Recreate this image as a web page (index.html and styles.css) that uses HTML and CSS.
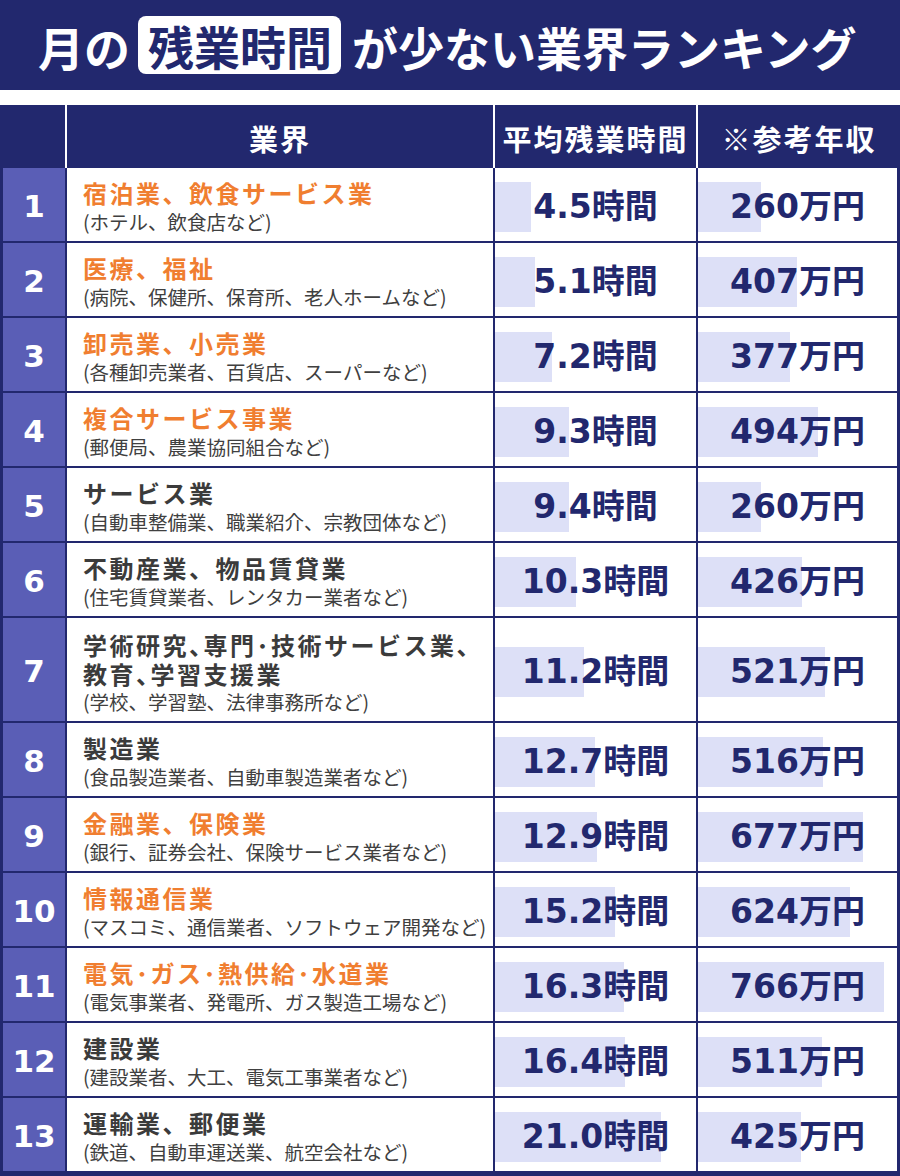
FILE: index.html
```html
<!DOCTYPE html>
<html lang="ja">
<head>
<meta charset="utf-8">
<title>月の残業時間が少ない業界ランキング</title>
<link rel="stylesheet" href="styles.css">
</head>
<body>
<div class="page">
  <header class="title">
    <span class="title-text">月の</span>
    <span class="title-box">残業時間</span>
    <span class="title-text title-rest">が少ない業界ランキング</span>
  </header>

  <div class="table">
    <div class="thead">
      <div class="th"></div>
      <div class="th">業界</div>
      <div class="th">平均残業時間</div>
      <div class="th">※参考年収</div>
    </div>

    <div class="tbody">
      <div class="row">
        <div class="rank">1</div>
        <div class="ind"><div class="name hl">宿泊業、飲食サービス業</div><div class="sub">(ホテル、飲食店など)</div></div>
        <div class="val"><div class="bar" style="width:35.6px"></div><div class="num">4.5時間</div></div>
        <div class="val"><div class="bar" style="width:63.2px"></div><div class="num">260万円</div></div>
      </div>
      <div class="row">
        <div class="rank">2</div>
        <div class="ind"><div class="name hl">医療、福祉</div><div class="sub">(病院、保健所、保育所、老人ホームなど)</div></div>
        <div class="val"><div class="bar" style="width:40.3px"></div><div class="num">5.1時間</div></div>
        <div class="val"><div class="bar" style="width:98.9px"></div><div class="num">407万円</div></div>
      </div>
      <div class="row">
        <div class="rank">3</div>
        <div class="ind"><div class="name hl">卸売業、小売業</div><div class="sub">(各種卸売業者、百貨店、スーパーなど)</div></div>
        <div class="val"><div class="bar" style="width:56.9px"></div><div class="num">7.2時間</div></div>
        <div class="val"><div class="bar" style="width:91.6px"></div><div class="num">377万円</div></div>
      </div>
      <div class="row">
        <div class="rank">4</div>
        <div class="ind"><div class="name hl">複合サービス事業</div><div class="sub">(郵便局、農業協同組合など)</div></div>
        <div class="val"><div class="bar" style="width:73.5px"></div><div class="num">9.3時間</div></div>
        <div class="val"><div class="bar" style="width:120px"></div><div class="num">494万円</div></div>
      </div>
      <div class="row">
        <div class="rank">5</div>
        <div class="ind"><div class="name">サービス業</div><div class="sub">(自動車整備業、職業紹介、宗教団体など)</div></div>
        <div class="val"><div class="bar" style="width:74.3px"></div><div class="num">9.4時間</div></div>
        <div class="val"><div class="bar" style="width:63.2px"></div><div class="num">260万円</div></div>
      </div>
      <div class="row">
        <div class="rank">6</div>
        <div class="ind"><div class="name">不動産業、物品賃貸業</div><div class="sub">(住宅賃貸業者、レンタカー業者など)</div></div>
        <div class="val"><div class="bar" style="width:81.4px"></div><div class="num">10.3時間</div></div>
        <div class="val"><div class="bar" style="width:103.5px"></div><div class="num">426万円</div></div>
      </div>
      <div class="row tall">
        <div class="rank">7</div>
        <div class="ind"><div class="name">学術研究<span class="tight">、</span>専門･技術サービス業、<br>教育<span class="tight">、</span>学習支援業</div><div class="sub sub-tight">(学校、学習塾、法律事務所など)</div></div>
        <div class="val"><div class="bar" style="width:88.5px"></div><div class="num">11.2時間</div></div>
        <div class="val"><div class="bar" style="width:126.6px"></div><div class="num">521万円</div></div>
      </div>
      <div class="row">
        <div class="rank">8</div>
        <div class="ind"><div class="name">製造業</div><div class="sub">(食品製造業者、自動車製造業者など)</div></div>
        <div class="val"><div class="bar" style="width:100.3px"></div><div class="num">12.7時間</div></div>
        <div class="val"><div class="bar" style="width:125.4px"></div><div class="num">516万円</div></div>
      </div>
      <div class="row">
        <div class="rank">9</div>
        <div class="ind"><div class="name hl">金融業、保険業</div><div class="sub">(銀行、証券会社、保険サービス業者など)</div></div>
        <div class="val"><div class="bar" style="width:101.9px"></div><div class="num">12.9時間</div></div>
        <div class="val"><div class="bar" style="width:164.5px"></div><div class="num">677万円</div></div>
      </div>
      <div class="row">
        <div class="rank">10</div>
        <div class="ind"><div class="name hl">情報通信業</div><div class="sub">(マスコミ、通信業者、ソフトウェア開発など)</div></div>
        <div class="val"><div class="bar" style="width:120.1px"></div><div class="num">15.2時間</div></div>
        <div class="val"><div class="bar" style="width:151.6px"></div><div class="num">624万円</div></div>
      </div>
      <div class="row">
        <div class="rank">11</div>
        <div class="ind"><div class="name hl">電気･ガス･熱供給･水道業</div><div class="sub">(電気事業者、発電所、ガス製造工場など)</div></div>
        <div class="val"><div class="bar" style="width:128.8px"></div><div class="num">16.3時間</div></div>
        <div class="val"><div class="bar" style="width:186.1px"></div><div class="num">766万円</div></div>
      </div>
      <div class="row">
        <div class="rank">12</div>
        <div class="ind"><div class="name">建設業</div><div class="sub">(建設業者、大工、電気工事業者など)</div></div>
        <div class="val"><div class="bar" style="width:129.6px"></div><div class="num">16.4時間</div></div>
        <div class="val"><div class="bar" style="width:124.2px"></div><div class="num">511万円</div></div>
      </div>
      <div class="row">
        <div class="rank">13</div>
        <div class="ind"><div class="name">運輸業、郵便業</div><div class="sub">(鉄道、自動車運送業、航空会社など)</div></div>
        <div class="val"><div class="bar" style="width:165.9px"></div><div class="num">21.0時間</div></div>
        <div class="val"><div class="bar" style="width:103.3px"></div><div class="num">425万円</div></div>
      </div>
    </div>
  </div>
</div>
</body>
</html>
```

FILE: styles.css
```css
html, body {
  margin: 0;
  padding: 0;
  background: #ffffff;
}

.page {
  width: 900px;
  font-family: "Noto Sans CJK JP", "Noto Sans", sans-serif;
}

/* Title bar */
.title {
  height: 90px;
  background: #22286e;
  display: flex;
  align-items: center;
  padding-left: 38px;
  box-sizing: border-box;
  color: #ffffff;
  font-weight: 700;
  font-size: 46px;
  line-height: 1;
}

.title-text {
  display: block;
  padding-top: 2px;
}

.title-box {
  display: block;
  background: #ffffff;
  color: #22286e;
  border-radius: 8px;
  height: 58px;
  line-height: 58px;
  padding: 0 9px 0 10px;
  margin-left: 8px;
  margin-top: -1px;
}

.title-rest {
  margin-left: 11px;
}

/* Table */
.table {
  margin-top: 15px;
}

.thead {
  display: grid;
  grid-template-columns: 65px 426px 201px 202px;
  column-gap: 2px;
  background: #ffffff;
  height: 63px;
}

.th {
  background: #22286e;
  color: #ffffff;
  font-weight: 700;
  font-size: 29px;
  letter-spacing: 2px;
  display: flex;
  align-items: center;
  justify-content: center;
  padding-top: 3px;
  box-sizing: border-box;
}

.tbody {
  background: #22286e;
  padding: 0 3px 5px 3px;
  display: flex;
  flex-direction: column;
  gap: 2px;
}

.row {
  display: grid;
  grid-template-columns: 62px 426px 201px 199px;
  column-gap: 2px;
  height: 73px;
}

.row.tall {
  height: 103px;
}

.rank {
  background: #5a5eb6;
  color: #ffffff;
  font-family: "DejaVu Sans", "Noto Sans CJK JP", sans-serif;
  font-weight: 700;
  font-size: 31px;
  display: flex;
  align-items: center;
  justify-content: center;
  padding-top: 3px;
  box-sizing: border-box;
}

.ind {
  background: #ffffff;
  display: flex;
  flex-direction: column;
  justify-content: center;
  padding: 3px 0 0 16px;
  box-sizing: border-box;
  white-space: nowrap;
}

.name {
  font-weight: 700;
  font-size: 24px;
  letter-spacing: 2.5px;
  line-height: 29px;
  color: #3b3b3b;
}

.name.hl {
  color: #f07e30;
}

.tight {
  font-feature-settings: "halt" 1;
}

.sub {
  font-size: 19.5px;
  line-height: 24px;
  margin-top: 3px;
  color: #404040;
}

.sub.sub-tight {
  margin-top: 3px;
  line-height: 22px;
}

.val {
  background: #ffffff;
  display: grid;
  grid-template-columns: 100%;
  grid-template-rows: 100%;
  padding-top: 5px;
  box-sizing: border-box;
}

.bar {
  grid-area: 1 / 1;
  justify-self: start;
  align-self: center;
  height: 50px;
  background: #dde0f7;
}

.num {
  grid-area: 1 / 1;
  justify-self: center;
  align-self: center;
  font-family: "DejaVu Sans", "Noto Sans CJK JP", sans-serif;
  font-weight: 700;
  font-size: 33px;
  line-height: 40px;
  color: #22286e;
  white-space: nowrap;
}
```
